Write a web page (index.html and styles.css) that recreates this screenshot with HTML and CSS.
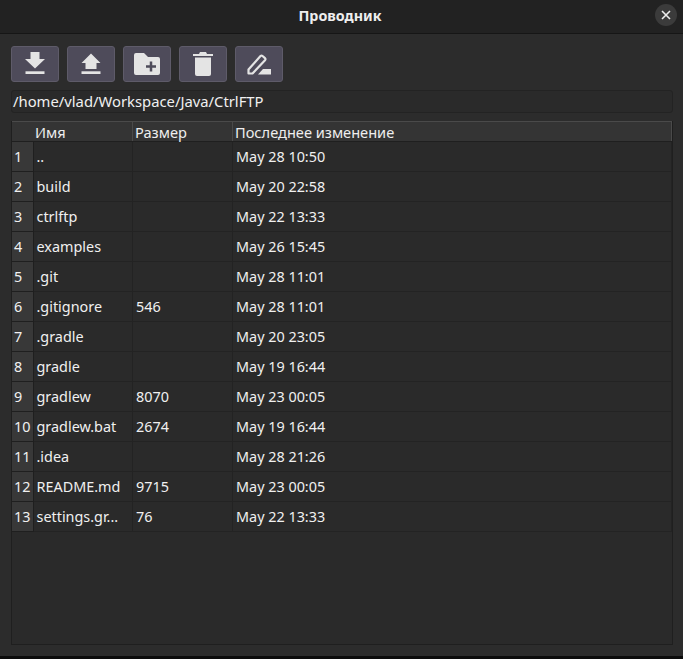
FILE: index.html
```html
<!DOCTYPE html>
<html>
<head>
    <title>Проводник</title>
    <link rel="stylesheet" href="styles.css">
</head>
<body>
    <div class="window">
        <div class="titlebar">
            <span class="title">Проводник</span>
            <button class="close-btn">
                <svg width="10" height="10" viewBox="0 0 10 10"><path d="M1 1L9 9M9 1L1 9" stroke="#eee" stroke-width="1.6"/></svg>
            </button>
        </div>
        <div class="content">
            <div class="toolbar">
                <button class="tool-btn">
                    <svg width="24" height="24" viewBox="0 0 24 24"><path d="M7.500 0h9v7h5.500l-10 9.500L2 7h5.500z" fill="#e4e4e4"/><rect x="2.500" y="19.300" width="19" height="2.700" fill="#e4e4e4"/></svg>
                </button>
                <button class="tool-btn">
                    <svg width="24" height="24" viewBox="0 0 24 24"><path d="M12 1.500L21.500 11h-4v6h-11v-6h-4z" fill="#e4e4e4"/><rect x="2.500" y="19.300" width="19" height="2.700" fill="#e4e4e4"/></svg>
                </button>
                <button class="tool-btn">
                    <svg width="28" height="24" viewBox="0 0 28 24"><path d="M3 1h8l4 4h10a2 2 0 0 1 2 2v14a2 2 0 0 1-2 2H3a2 2 0 0 1-2-2V3a2 2 0 0 1 2-2z" fill="#e4e4e4"/><path d="M13 14.500h10M18 9.500v10" stroke="#4e4b5a" stroke-width="2.500"/></svg>
                </button>
                <button class="tool-btn">
                    <svg width="24" height="26" viewBox="0 0 24 26"><path d="M2 3h6l1-2h6l1 2h6v2H2z" fill="#e4e4e4"/><path d="M4 6.500h16V23a2 2 0 0 1-2 2H6a2 2 0 0 1-2-2z" fill="#e4e4e4"/></svg>
                </button>
                <button class="tool-btn">
                    <svg width="26" height="26" viewBox="0 0 26 26"><path d="M2.500 22.500v-4L14.500 5a1.500 1.500 0 0 1 2 0l2.500 2.200a1.500 1.500 0 0 1 0 2L6.500 22.500z" fill="none" stroke="#e4e4e4" stroke-width="2.200" stroke-linejoin="round"/><path d="M12 23.500L17 18h8v5.500z" fill="#e4e4e4"/></svg>
                </button>
            </div>
            <div class="path-field">/home/vlad/Workspace/Java/CtrlFTP</div>
            <div class="table-frame">
                <table class="files">
                    <thead>
                        <tr>
                            <th class="corner"></th>
                            <th class="col-name">Имя</th>
                            <th class="col-size">Размер</th>
                            <th>Последнее изменение</th>
                        </tr>
                    </thead>
                    <tbody>
                        <tr><th>1</th><td>..</td><td></td><td>May 28 10:50</td></tr>
                        <tr><th>2</th><td>build</td><td></td><td>May 20 22:58</td></tr>
                        <tr><th>3</th><td>ctrlftp</td><td></td><td>May 22 13:33</td></tr>
                        <tr><th>4</th><td>examples</td><td></td><td>May 26 15:45</td></tr>
                        <tr><th>5</th><td>.git</td><td></td><td>May 28 11:01</td></tr>
                        <tr><th>6</th><td>.gitignore</td><td>546</td><td>May 28 11:01</td></tr>
                        <tr><th>7</th><td>.gradle</td><td></td><td>May 20 23:05</td></tr>
                        <tr><th>8</th><td>gradle</td><td></td><td>May 19 16:44</td></tr>
                        <tr><th>9</th><td>gradlew</td><td>8070</td><td>May 23 00:05</td></tr>
                        <tr><th>10</th><td>gradlew.bat</td><td>2674</td><td>May 19 16:44</td></tr>
                        <tr><th>11</th><td>.idea</td><td></td><td>May 28 21:26</td></tr>
                        <tr><th>12</th><td>README.md</td><td>9715</td><td>May 23 00:05</td></tr>
                        <tr><th>13</th><td>settings.gr...</td><td>76</td><td>May 22 13:33</td></tr>
                    </tbody>
                </table>
            </div>
        </div>
    </div>
</body>
</html>
```

FILE: styles.css
```css
html, body {
    height: 100%;
}

body {
    margin: 0;
    background-color: #0c0c0c;
    color: #f0f0f0;
    font-family: "Noto Sans", sans-serif;
    font-size: 14.4px;
}

.window {
    height: 656px;
    display: flex;
    flex-direction: column;
    background-color: #2c2c2c;
}

/* Title bar */
.titlebar {
    height: 33px;
    flex: none;
    display: flex;
    justify-content: center;
    align-items: center;
    position: relative;
    background-color: #222;
    border-bottom: 1px solid #161616;
}

.title {
    font-weight: bold;
    font-size: 14.3px;
    color: #eee;
    margin-top: -2px;
    margin-right: 3px;
}

.close-btn {
    position: absolute;
    top: 4px;
    right: 6px;
    width: 22px;
    height: 22px;
    padding: 0;
    border: none;
    border-radius: 50%;
    background-color: #3b3b3b;
    display: flex;
    justify-content: center;
    align-items: center;
}

.content {
    flex: 1;
    min-height: 0;
    display: flex;
    flex-direction: column;
    padding: 12px 10px 11px 11px;
}

/* Toolbar */
.toolbar {
    display: flex;
    gap: 8px;
    margin-bottom: 8px;
}

.tool-btn {
    width: 48px;
    height: 36px;
    padding: 0;
    border: 1px solid #5e5b69;
    border-radius: 3px;
    background-color: #4e4b5a;
    display: flex;
    justify-content: center;
    align-items: center;
}

.path-field {
    height: 23px;
    line-height: 20px;
    padding-left: 1px;
    margin-bottom: 8px;
    box-sizing: border-box;
    border: 1px solid #232323;
    border-radius: 3px;
    background-color: #2a2a2a;
    font-size: 14.8px;
}

/* Table */
.table-frame {
    flex: 1;
    min-height: 0;
    border: 1px solid #1f1f1f;
    border-top: none;
    background-color: #2a2a2a;
}

.files {
    width: 100%;
    table-layout: fixed;
    border-collapse: collapse;
}

.files thead th {
    height: 19px;
    padding: 0 0 0 2px;
    line-height: 16px;
    text-align: left;
    font-weight: normal;
    font-size: 14.6px;
    color: #eee;
    background-color: #343434;
    border-top: 1px solid #4a4a4a;
    border-right: 1px solid #4a4a4a;
    border-bottom: 1px solid #1f1f1f;
}

.files .corner {
    width: 19px;
    border-right: none;
}

.files .col-name,
.files .col-size {
    width: 97px;
}

.files tbody th {
    height: 29px;
    padding: 0 0 0 2px;
    text-align: left;
    font-weight: normal;
    background-color: #383838;
    border-right: 1px solid #1f1f1f;
    border-bottom: 1px solid #1f1f1f;
}

.files td {
    padding: 0 0 0 3px;
    white-space: nowrap;
    overflow: hidden;
    border-right: 1px solid #232323;
    border-bottom: 1px solid #232323;
}
```
